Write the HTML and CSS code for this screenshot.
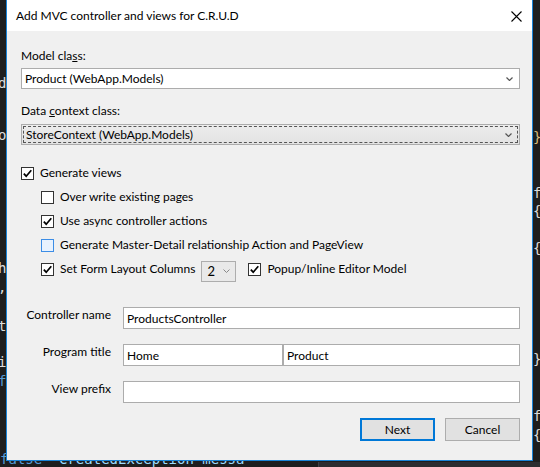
FILE: index.html
```html
<!DOCTYPE html>
<html>
<head>
<meta charset="utf-8">
<link rel="stylesheet" href="styles.css">
</head>
<body>
<div class="code">
  <span class="g" style="left:-2px;top:75px">d</span>
  <span class="g" style="left:-2px;top:127px">o</span>
  <span class="g" style="left:-2px;top:260px">h</span>
  <span class="g" style="left:-2px;top:279px">,</span>
  <span class="g" style="left:-2px;top:318px">t</span>
  <span class="g" style="left:-2px;top:354px">i</span>
  <span class="g kw" style="left:-2px;top:373px">f</span>
  <span class="g br" style="left:533px;top:129px">}</span>
  <span class="g" style="left:533px;top:185px">f</span>
  <span class="g" style="left:533px;top:203px">{</span>
  <span class="g" style="left:533px;top:240px">{</span>
  <span class="g" style="left:533px;top:351px">}</span>
  <span class="g" style="left:533px;top:408px">f</span>
  <span class="g" style="left:533px;top:427px">{</span>
  <span class="g kw" style="left:0px;top:451px">false  <span class="dim">CreatedException messa</span></span>
  <span class="panel"></span>
</div>
<div class="dialog">
  <div class="titlebar">
    <span class="title">Add MVC controller and views for C.R.U.D</span>
    <svg class="close" width="11" height="11" viewBox="0 0 11 11"><path d="M0.5 0.5 L10.5 10.5 M10.5 0.5 L0.5 10.5" stroke="#000" stroke-width="1.1" fill="none"/></svg>
  </div>
  <div class="content">
    <div class="label first">Model cla<u>s</u>s:</div>
    <div class="combo white">
      <span class="ctext">Product (WebApp.Models)</span>
      <svg class="chev" width="7" height="4" viewBox="0 0 7 4"><path d="M0.5 0.5 L3.5 3.5 L6.5 0.5" stroke="#555" stroke-width="1.2" fill="none"/></svg>
    </div>
    <div class="label second">Data <u>c</u>ontext class:</div>
    <div class="combo focused">
      <div class="focusrect">
        <span class="ctext">StoreContext (WebApp.Models)</span>
        <svg class="chev" width="7" height="4" viewBox="0 0 7 4"><path d="M0.5 0.5 L3.5 3.5 L6.5 0.5" stroke="#555" stroke-width="1.2" fill="none"/></svg>
      </div>
    </div>

    <div class="checks">
      <div class="row">
        <span class="box"><svg width="11" height="11" viewBox="0 0 11 11"><path d="M1.8 5.6 L4.2 8.2 L9.3 2.3" stroke="#000" stroke-width="1.7" fill="none"/></svg></span>
        <span>Generate views</span>
      </div>
      <div class="sub">
        <div class="row">
          <span class="box"></span>
          <span>Over write existing pages</span>
        </div>
        <div class="row">
          <span class="box"><svg width="11" height="11" viewBox="0 0 11 11"><path d="M1.8 5.6 L4.2 8.2 L9.3 2.3" stroke="#000" stroke-width="1.7" fill="none"/></svg></span>
          <span>Use async controller actions</span>
        </div>
        <div class="row">
          <span class="box hover"></span>
          <span>Generate Master-Detail relationship Action and PageView</span>
        </div>
        <div class="row">
          <span class="box"><svg width="11" height="11" viewBox="0 0 11 11"><path d="M1.8 5.6 L4.2 8.2 L9.3 2.3" stroke="#000" stroke-width="1.7" fill="none"/></svg></span>
          <span>Set Form Layout Columns</span>
          <span class="mini">
            <span class="mtext">2</span>
            <svg class="chev" width="7" height="4" viewBox="0 0 7 4"><path d="M0.5 0.5 L3.5 3.5 L6.5 0.5" stroke="#888" stroke-width="1" fill="none"/></svg>
          </span>
          <span class="box"><svg width="11" height="11" viewBox="0 0 11 11"><path d="M1.8 5.6 L4.2 8.2 L9.3 2.3" stroke="#000" stroke-width="1.7" fill="none"/></svg></span>
          <span>Popup/Inline Editor Model</span>
        </div>
      </div>
    </div>

    <div class="fields">
      <div class="field">
        <div class="flabel">Controller name</div>
        <div class="input">ProductsController</div>
      </div>
      <div class="field">
        <div class="flabel">Program title</div>
        <div class="input half">Home</div>
        <div class="input rest">Product</div>
      </div>
      <div class="field">
        <div class="flabel">View prefix</div>
        <div class="input"></div>
      </div>
    </div>

    <div class="buttons">
      <div class="btn default">Next</div>
      <div class="btn">Cancel</div>
    </div>
  </div>
</div>
</body>
</html>
```
FILE: styles.css
```css
* { box-sizing: border-box; }

body {
  margin: 0;
  width: 540px;
  height: 467px;
  overflow: hidden;
  position: relative;
  background: #1e1e1e;
  font-family: Lato, "Noto Sans", sans-serif;
  font-size: 12px;
  color: #000;
}

.code {
  position: absolute;
  inset: 0;
  font-family: "DejaVu Sans Mono", monospace;
  font-size: 14px;
  line-height: 16px;
  color: #dcdcdc;
}
.code .g { position: absolute; white-space: pre; }
.code .kw { color: #569cd6; }
.code .br { color: #d7ba7d; }
.code .dim { color: #9cdcfe; }
.code .panel {
  position: absolute;
  left: 318px;
  top: 462px;
  width: 222px;
  height: 5px;
  background: #2d2d30;
  border-left: 1px solid #3f3f46;
}

.dialog {
  position: relative;
  margin-left: 6px;
  width: 527px;
  height: 461px;
  border: 1px solid #1883d7;
  border-top: none;
  background: #f0f0f0;
  display: flex;
  flex-direction: column;
}

.titlebar {
  height: 31px;
  background: #fff;
  display: flex;
  align-items: center;
  padding: 0 10px 0 9px;
  line-height: 16px;
}
.title { font-size: 12px; }
.close { margin-left: auto; margin-top: 1px; }

.content {
  padding: 0 12px 0 14px;
  line-height: 16px;
}

.label { height: 16px; }
.label.first { margin-top: 17px; }
.label.second { margin-top: 14px; }

.combo {
  height: 21px;
  border: 1px solid #acacac;
  display: flex;
  align-items: center;
  position: relative;
}
.combo.white {
  margin-top: 4px;
  background: #fff;
  padding: 0 6px 0 3px;
}
.combo.focused {
  margin-top: 5px;
  background: linear-gradient(#ececec, #e3e3e3);
  padding: 1px;
}
.focusrect {
  flex: 1;
  height: 17px;
  border: 1px dashed #555;
  display: flex;
  align-items: center;
  padding: 0 5px 0 2px;
}
.ctext { flex: 1; }
.chev { display: block; }

.checks { margin-top: 16px; }
.row {
  height: 24px;
  display: flex;
  align-items: center;
}
.sub { padding-left: 20px; }
.box {
  width: 13px;
  height: 13px;
  border: 1px solid #333;
  background: #fff;
  margin-right: 6px;
  display: flex;
  align-items: center;
  justify-content: center;
  flex: none;
}
.box.hover {
  border-color: #3c8de6;
  background: #e8f2fe;
}
.mini {
  margin: 4px 12px 0 6px;
  width: 35px;
  height: 21px;
  border: 1px solid #adadad;
  background: #e9e9e9;
  display: flex;
  align-items: center;
  padding: 0 5px 0 5px;
  font-size: 13px;
}
.mini .mtext { flex: 1; }

.fields { margin-top: 26px; }
.field {
  display: flex;
  height: 22px;
  margin-bottom: 15px;
}
.flabel {
  width: 90px;
  margin-right: 12px;
  text-align: right;
  line-height: 14px;
  padding-top: 1px;
}
.input {
  flex: 1;
  height: 22px;
  border: 1px solid #acacac;
  background: #fff;
  padding: 3px 0 0 3px;
  line-height: 16px;
}
.input.half { flex: none; width: 160px; }
.input.rest { padding-left: 3px; }

.buttons {
  display: flex;
  justify-content: flex-end;
  gap: 10px;
  margin-top: 6px;
}
.btn {
  width: 75px;
  height: 23px;
  border: 1px solid #adadad;
  background: #e1e1e1;
  display: flex;
  align-items: center;
  justify-content: center;
}
.btn.default {
  border: 2px solid #0078d7;
}
```
